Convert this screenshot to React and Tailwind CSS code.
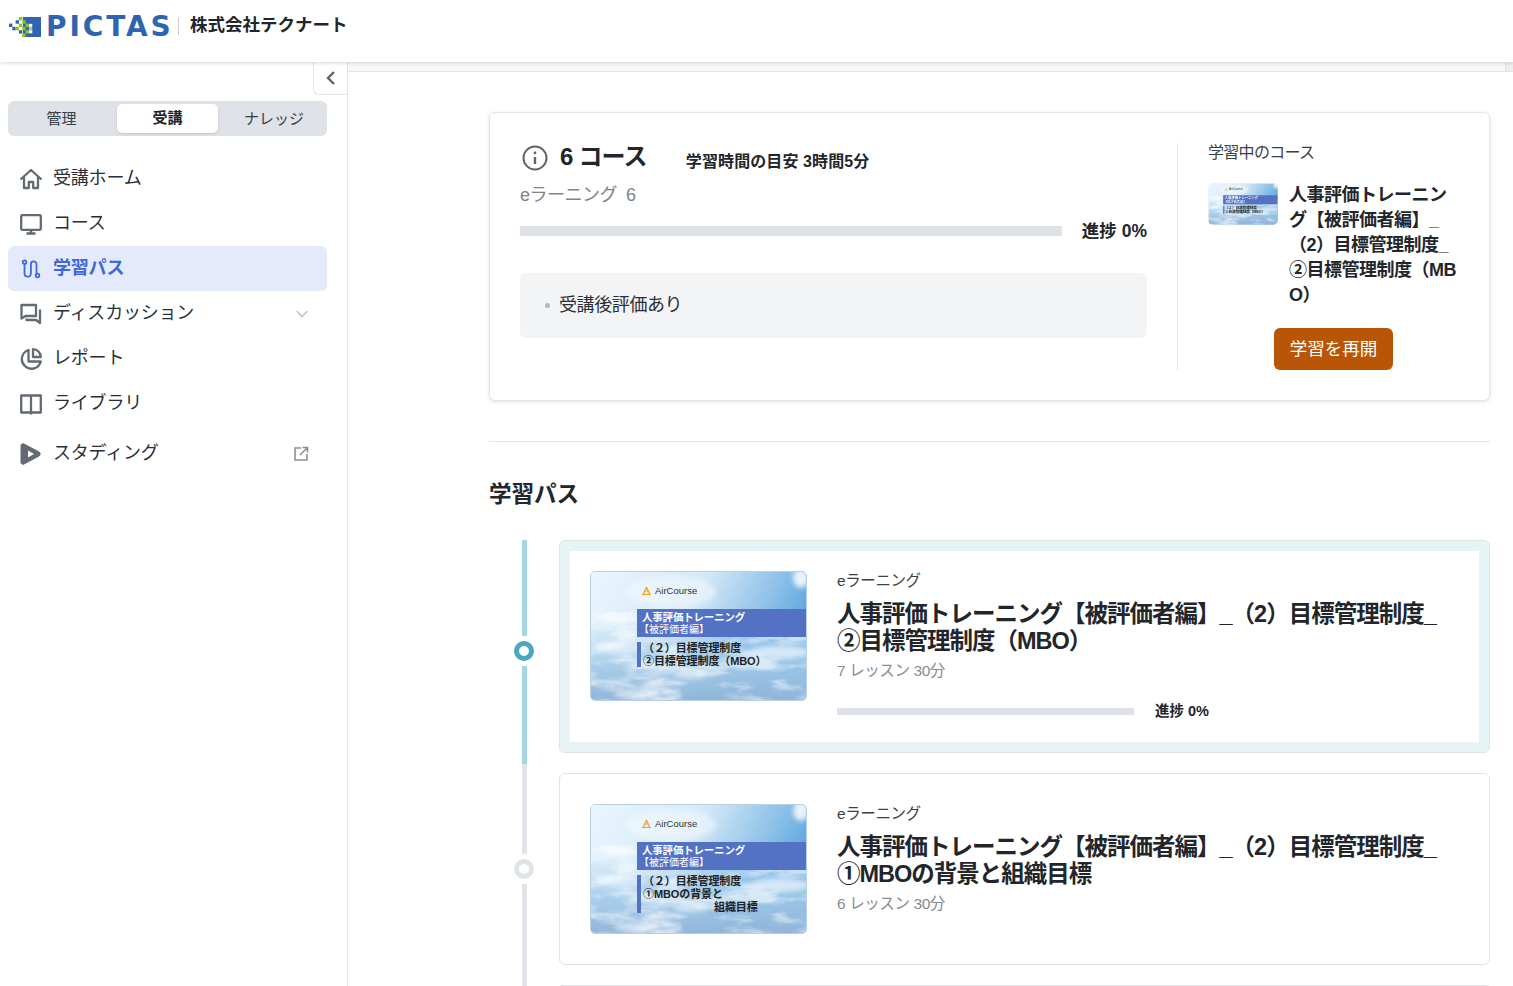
import React from "react";

const FONT = "font-['Liberation_Sans','Noto_Sans_CJK_JP',sans-serif]";

function Logo() {
  const blue = "#2f64b0", g = "#8fc31f", l = "#9dbbe0";
  const cells = [
    [0, 2, blue],[1, 3, blue],[2, 1, blue],[2, 3, g],[3, 0, g],[3, 2, g],[3, 4, blue],[4, 1, g],[4, 3, g],[4, 5, g],
    [5, 0, blue],[5, 2, g],[5, 4, g],[6, 1, blue],[6, 3, l],[6, 5, blue],
  ];
  return (
    <svg width="32" height="20" viewBox="0 0 32 20" className="shrink-0">
      <rect x="14" y="0" width="18" height="20" fill={blue} />
      <rect x="20" y="6.6" width="3.3" height="3.3" fill="#fff" />
      <rect x="20" y="13.2" width="3.3" height="3.3" fill="#fff" />
      {cells.map(([c, r, f], i) => (
        <rect key={i} x={c * 3.3} y={r * 3.3} width="3.4" height="3.4" fill={f} />
      ))}
    </svg>
  );
}

const ico = { fill: "none", stroke: "#636a72", strokeWidth: 2.3 };

const Icons = {
  home: (
    <svg width="24" height="24" viewBox="0 0 24 24" {...ico}>
      <path d="M1.5 12.5 12 3l10.5 9.5M5 10v11h4.8v-6h4.4v6H19V10" strokeLinejoin="round" />
    </svg>
  ),
  monitor: (
    <svg width="24" height="24" viewBox="0 0 24 24" {...ico}>
      <rect x="2.2" y="3.2" width="19.6" height="14.6" rx="1" />
      <path d="M12 18v3M7.5 21.5h9" strokeWidth="2.6" />
    </svg>
  ),
  path: (
    <svg width="20" height="20" viewBox="0 0 20 20" fill="none" stroke="#3f68d9" strokeWidth="1.8" strokeLinecap="round">
      <circle cx="3.5" cy="3.2" r="1.8" />
      <circle cx="16.5" cy="16.5" r="1.8" />
      <path d="M3.5 5v9.5a3.2 3.2 0 0 0 6.4 0V5.2a2.8 2.8 0 0 1 5.6 0v9.5" />
    </svg>
  ),
  chat: (
    <svg width="24" height="24" viewBox="0 0 24 24" fill="none" stroke="#636a72" strokeWidth="2.3">
      <path d="M2.5 3h14.5v11H6.5L2.5 16.5z" strokeLinejoin="round" />
      <path d="M21 7.5V21l-3.8-3H7.5v-1.5" strokeLinejoin="round" />
    </svg>
  ),
  pie: (
    <svg width="24" height="24" viewBox="0 0 24 24" {...ico}>
      <path d="M9.5 3A9.6 9.6 0 1 0 21.8 14.5H9.5z" strokeLinejoin="round" />
      <path d="M14 2.2A8 8 0 0 1 21.8 10H14z" strokeLinejoin="round" />
    </svg>
  ),
  book: (
    <svg width="24" height="24" viewBox="0 0 24 24" {...ico}>
      <path d="M12 3.5H2.2v17H12m0-17h9.8v17H12m0-17v19" strokeLinejoin="round" />
    </svg>
  ),
  play: (
    <svg width="22" height="24" viewBox="0 0 22 24">
      <path d="M4 2 19 10a2.3 2.3 0 0 1 0 4L4 22a2 2 0 0 1-3-1.8V3.8A2 2 0 0 1 4 2z" fill="#636a72" stroke="#636a72" strokeWidth="1" strokeLinejoin="round" />
      <path d="M8 8.5v7l6-3.5z" fill="#fff" />
    </svg>
  ),
  external: (
    <svg width="16" height="16" viewBox="0 0 16 16" fill="none" stroke="#8b9198" strokeWidth="1.6">
      <path d="M8 2H2v12h12V8M9.5 1.5h5v5M14.3 1.7 7 9" />
    </svg>
  ),
  chevDown: (
    <svg width="14" height="10" viewBox="0 0 14 10" fill="none" stroke="#c3c7cc" strokeWidth="1.6">
      <path d="m1.5 2 5.5 5.5L12.5 2" />
    </svg>
  ),
  chevLeft: (
    <svg width="10" height="16" viewBox="0 0 10 16" fill="none" stroke="#5f656c" strokeWidth="2.4">
      <path d="M8 2 2 8l6 6" />
    </svg>
  ),
  info: (
    <svg width="26" height="26" viewBox="0 0 26 26" fill="none" stroke="#5f656c" strokeWidth="2">
      <circle cx="13" cy="13" r="11.5" />
      <path d="M13 12v7" strokeWidth="2.4" />
      <circle cx="13" cy="8" r="1.4" fill="#5f656c" stroke="none" />
    </svg>
  ),
};

function Cloud({ id }) {
  return (
    <svg className="absolute inset-0" width="217" height="130" viewBox="0 0 217 130" preserveAspectRatio="none">
      <defs>
        <linearGradient id={`sky${id}`} x1="0" y1="0" x2="1" y2="0.3">
          <stop offset="0" stopColor="#eaf6fe" />
          <stop offset="0.5" stopColor="#d3e8f7" />
          <stop offset="0.82" stopColor="#8cc0e8" />
          <stop offset="1" stopColor="#5ea7df" />
        </linearGradient>
        <linearGradient id={`low${id}`} x1="0" y1="0" x2="0" y2="1">
          <stop offset="0" stopColor="#9cc8ea" stopOpacity="0" />
          <stop offset="0.5" stopColor="#a3cbea" stopOpacity="0.85" />
          <stop offset="1" stopColor="#8fb4d8" />
        </linearGradient>
        <filter id={`n${id}`} x="0" y="0" width="100%" height="100%">
          <feTurbulence type="fractalNoise" baseFrequency="0.022 0.07" numOctaves="4" seed="7" />
          <feColorMatrix values="0 0 0 0 1  0 0 0 0 1  0 0 0 0 1  0 0 0 3.5 -1.5" />
        </filter>
        <filter id={`b${id}`} x="-30%" y="-50%" width="160%" height="200%">
          <feGaussianBlur stdDeviation="2.5" />
        </filter>
      </defs>
      <rect width="217" height="130" fill={`url(#sky${id})`} />
      <rect y="50" width="217" height="80" fill={`url(#low${id})`} />
      <rect y="40" width="217" height="90" filter={`url(#n${id})`} opacity="0.6" />
      <g filter={`url(#b${id})`} fill="#f4fafe">
        <ellipse cx="80" cy="20" rx="45" ry="16" opacity="0.55" />
        <ellipse cx="210" cy="6" rx="8" ry="10" opacity="0.9" />
        <ellipse cx="190" cy="80" rx="30" ry="7" opacity="0.7" />
        <ellipse cx="30" cy="76" rx="24" ry="7" opacity="0.5" />
        <ellipse cx="100" cy="102" rx="18" ry="5" opacity="0.6" />
        <ellipse cx="45" cy="122" rx="22" ry="5" opacity="0.6" />
      </g>
    </svg>
  );
}

function Thumb({ id, lines, extraBar }) {
  return (
    <div className="relative w-[217px] h-[130px] shrink-0 rounded-[5px] overflow-hidden border border-[#b9cfe2]">
      <Cloud id={id} />
      <div className="absolute left-[50px] top-[14px] flex items-center gap-[3px]">
        <svg width="11" height="10" viewBox="0 0 11 10" fill="none" stroke="#f0a020" strokeWidth="1.2">
          <path d="M5.5 1 2 9M5.5 1 9 9M3.5 5h4M1 8.5h9" />
        </svg>
        <span className="text-[9.5px] leading-none text-[#333]">AirCourse</span>
      </div>
      <div className="absolute left-[46px] right-0 top-[37px] h-[28px] bg-[#5472c4] pl-[5px] pt-[2px] text-white">
        <div className="text-[10.5px] leading-[13px] tracking-[-0.2px] font-bold whitespace-nowrap">人事評価トレーニング</div>
        <div className="-ml-[3px] text-[10px] leading-[12px] whitespace-nowrap">【被評価者編】</div>
      </div>
      <div className="absolute left-[46px] top-[70px] w-[4px] bg-[#5472c4]" style={{ height: extraBar ? 38 : 25 }} />
      <div className="absolute left-[52px] top-[70px] w-[165px] text-[11px] leading-[13px] tracking-[-0.1px] font-bold text-[#222] whitespace-nowrap">
        {lines.map((t, i) => (
          <div key={i} className={t.startsWith("　") ? "pl-[71px]" : ""}>{t.trim()}</div>
        ))}
      </div>
    </div>
  );
}

function NavRow({ icon, label, active, right, className = "" }) {
  return (
    <div className={`flex items-center h-[45px] rounded-md pl-[11px] pr-[18px] ${active ? "bg-[#e4eafc]" : ""} ${className}`}>
      <span className="w-[24px] h-[24px] flex items-center justify-center shrink-0">{icon}</span>
      <span className={`ml-[10px] text-[18px] tracking-[-0.2px] whitespace-nowrap ${active ? "font-bold text-[#3f68d9]" : "text-[#2a2f36]"}`}>{label}</span>
      {right && <span className="ml-auto flex items-center">{right}</span>}
    </div>
  );
}

function Sidebar() {
  return (
    <aside className="relative w-[348px] shrink-0 border-r border-[#e2e5e9] px-[8px] pt-[39px]">
      <button className="absolute right-0 top-0 w-[34px] h-[33px] pl-[1px] flex items-center justify-center border-l border-b border-[#e2e5e9] rounded-bl-md bg-white">
        {Icons.chevLeft}
      </button>
      <div className="w-[319px] h-[35px] rounded-md bg-[#dfe2e6] flex p-[3px] text-[15px] text-[#3a3f46]">
        <div className="w-[106px] pr-[5px] pt-[1px] flex items-center justify-center">管理</div>
        <div className="w-[101px] flex items-center justify-center rounded-[5px] bg-white font-bold text-[#1f2328] shadow-sm">受講</div>
        <div className="flex-1 pl-[6px] pt-[1px] flex items-center justify-center">ナレッジ</div>
      </div>
      <nav className="mt-[20px] w-[319px] flex flex-col">
        <NavRow icon={Icons.home} label="受講ホーム" />
        <NavRow icon={Icons.monitor} label="コース" />
        <NavRow icon={Icons.path} label="学習パス" active />
        <NavRow icon={Icons.chat} label="ディスカッション" right={Icons.chevDown} />
        <NavRow icon={Icons.pie} label="レポート" />
        <NavRow icon={Icons.book} label="ライブラリ" />
        <NavRow icon={Icons.play} label="スタディング" right={Icons.external} className="mt-[5px]" />
      </nav>
    </aside>
  );
}

function SummaryCard() {
  return (
    <section className="h-[289px] rounded-md border border-[#e2e5e9] shadow-[0_1px_4px_rgba(0,0,0,0.12)] bg-white flex pt-[30px] pl-[30px]">
      <div className="w-[627px] shrink-0">
        <div className="flex items-center h-[30px]">
          <span className="ml-[2px]">{Icons.info}</span>
          <span className="ml-[12px] -mt-[2px] text-[24px] tracking-[-0.8px] font-bold text-[#22262b] whitespace-nowrap">6 コース</span>
          <span className="ml-[39px] mt-[8px] text-[16px] tracking-[0.1px] font-bold text-[#22262b] whitespace-nowrap">学習時間の目安 3時間5分</span>
        </div>
        <div className="mt-[8px] text-[18px] leading-[28px] tracking-[-0.5px] text-[#7d848c] whitespace-nowrap">eラーニング&nbsp; 6</div>
        <div className="mt-[9px] flex items-center">
          <div className="w-[542px] h-[10px] bg-[#dfe2e6]" />
          <span className="ml-auto text-[17.5px] font-bold text-[#22262b] whitespace-nowrap">進捗 0%</span>
        </div>
        <div className="mt-[29px] h-[65px] rounded-md bg-[#f3f4f6] flex items-center pl-[25px]">
          <span className="w-[5px] h-[5px] rounded-full bg-[#b4b9bf]" />
          <span className="ml-[9px] text-[18px] tracking-[-0.4px] text-[#2a2f36]">受講後評価あり</span>
        </div>
      </div>
      <div className="ml-[30px] w-px h-[227px] bg-[#e2e5e9]" />
      <div className="ml-[30px] w-[260px]">
        <div className="text-[16px] leading-[20px] tracking-[-0.7px] text-[#3a3f46] whitespace-nowrap">学習中のコース</div>
        <div className="mt-[20px] flex items-start">
          <div className="w-[70px] h-[42px] rounded-[5px] overflow-hidden shrink-0">
            <div className="origin-top-left scale-[0.3226]">
              <Thumb id="s" lines={["（２）目標管理制度", "②目標管理制度（MBO）"]} />
            </div>
          </div>
          <div className="ml-[11px] text-[18px] leading-[25px] tracking-[-0.5px] font-bold text-[#22262b] whitespace-nowrap">
            人事評価トレーニン
            <br />グ【被評価者編】_
            <br />（2）目標管理制度_
            <br />②目標管理制度（MB
            <br />O）
          </div>
        </div>
        <button className="mt-[20px] ml-[66px] w-[119px] h-[42px] rounded-md bg-[#b85507] text-white text-[17.5px]">学習を再開</button>
      </div>
    </section>
  );
}

function Line({ className }) {
  return <div className={`w-[5px] ml-[8px] ${className}`} />;
}

function Node({ color }) {
  return <div className={`my-[5px] w-[20px] h-[20px] rounded-full border-[5px] bg-white ${color}`} />;
}

function Progress() {
  return (
    <div className="mt-[20px] flex items-center">
      <div className="w-[297px] h-[7px] bg-[#dfe2e6]" />
      <span className="ml-[21px] text-[14.5px] font-bold text-[#22262b] whitespace-nowrap">進捗 0%</span>
    </div>
  );
}

function CourseBody({ title1, title2, lessons, progress }) {
  return (
    <div className="ml-[30px] min-w-0">
      <div className="text-[15.5px] leading-[20px] tracking-[-0.4px] text-[#3a3f46]">eラーニング</div>
      <div className="mt-[10px] text-[23.5px] leading-[27px] tracking-[-1px] font-bold text-[#22262b] whitespace-nowrap">
        {title1}
        <br />
        {title2}
      </div>
      <div className="mt-[6px] text-[15.5px] leading-[20px] tracking-[-0.4px] text-[#868c93]">{lessons}</div>
      {progress && <Progress />}
    </div>
  );
}

function PathList() {
  return (
    <div className="flex flex-col">
      <div className="flex h-[233px]">
        <div className="w-[70px] shrink-0 pl-[25px] flex flex-col">
          <Line className="h-[96px] bg-[#a5d5de]" />
          <Node color="border-[#4ba7bd]" />
          <Line className="h-[98px] bg-[#a5d5de]" />
          <Line className="flex-1 bg-[#e0e4e8]" />
        </div>
        <div className="flex-1 h-[213px] rounded-md border border-[#dfe3e7] bg-[#e6f4f5] p-[10px]">
          <div className="h-full bg-white flex pl-[20px] pt-[20px]">
            <Thumb id="a" lines={["（２）目標管理制度", "②目標管理制度（MBO）"]} />
            <CourseBody
              title1="人事評価トレーニング【被評価者編】_（2）目標管理制度_"
              title2="②目標管理制度（MBO）"
              lessons="7 レッスン 30分"
              progress
            />
          </div>
        </div>
      </div>
      <div className="flex h-[212px]">
        <div className="w-[70px] shrink-0 pl-[25px] flex flex-col">
          <Line className="h-[81px] bg-[#e0e4e8]" />
          <Node color="border-[#e0e4e8]" />
          <Line className="flex-1 bg-[#e0e4e8]" />
        </div>
        <div className="flex-1 h-[192px] rounded-md border border-[#dfe3e7] bg-white flex pl-[30px] pt-[30px]">
          <Thumb id="b" extraBar lines={["（２）目標管理制度", "①MBOの背景と", "　組織目標"]} />
          <CourseBody
            title1="人事評価トレーニング【被評価者編】_（2）目標管理制度_"
            title2="①MBOの背景と組織目標"
            lessons="6 レッスン 30分"
          />
        </div>
      </div>
      <div className="flex">
        <div className="w-[70px] shrink-0 pl-[25px]">
          <Line className="h-[4px] bg-[#e0e4e8]" />
        </div>
        <div className="flex-1 h-[4px] rounded-t-md border-t border-[#dfe3e7]" />
      </div>
    </div>
  );
}

export default function App() {
  return (
    <div className={`${FONT} h-[986px] w-full overflow-hidden bg-white flex flex-col`}>
      <header className="relative z-10 h-[62px] shrink-0 bg-white shadow-[0_1px_4px_rgba(0,0,0,0.16)] flex items-start pl-[9px] pt-[17px]">
        <Logo />
        <span className="ml-[5px] w-[124px] text-[28px] leading-[20px] font-['DejaVu_Sans',sans-serif] font-bold text-[#2f64b0] tracking-[2.9px] whitespace-nowrap">PICTAS</span>
        <span className="ml-[8px] w-px h-[18px] bg-[#c9cdd2]" />
        <span className="ml-[11px] -mt-[2px] text-[17.5px] leading-[20px] font-bold text-[#22262b] whitespace-nowrap">株式会社テクナート</span>
      </header>
      <div className="flex flex-1 min-h-0">
        <Sidebar />
        <main className="flex-1 min-w-0">
          <div className="h-[10px] flex border-b border-[#e2e5e9] bg-[#f7f8f9]">
            <div className="ml-auto w-[8px] border-l border-[#dfe2e6] bg-[#eceef0]" />
          </div>
          <div className="pl-[141px] pr-[23px] pt-[40px]">
            <SummaryCard />
            <hr className="mt-[40px] border-t border-[#e2e5e9]" />
            <h2 className="mt-[36px] text-[22.5px] leading-[34px] font-bold text-[#22262b]">学習パス</h2>
            <div className="mt-[28px]">
              <PathList />
            </div>
          </div>
        </main>
      </div>
    </div>
  );
}
